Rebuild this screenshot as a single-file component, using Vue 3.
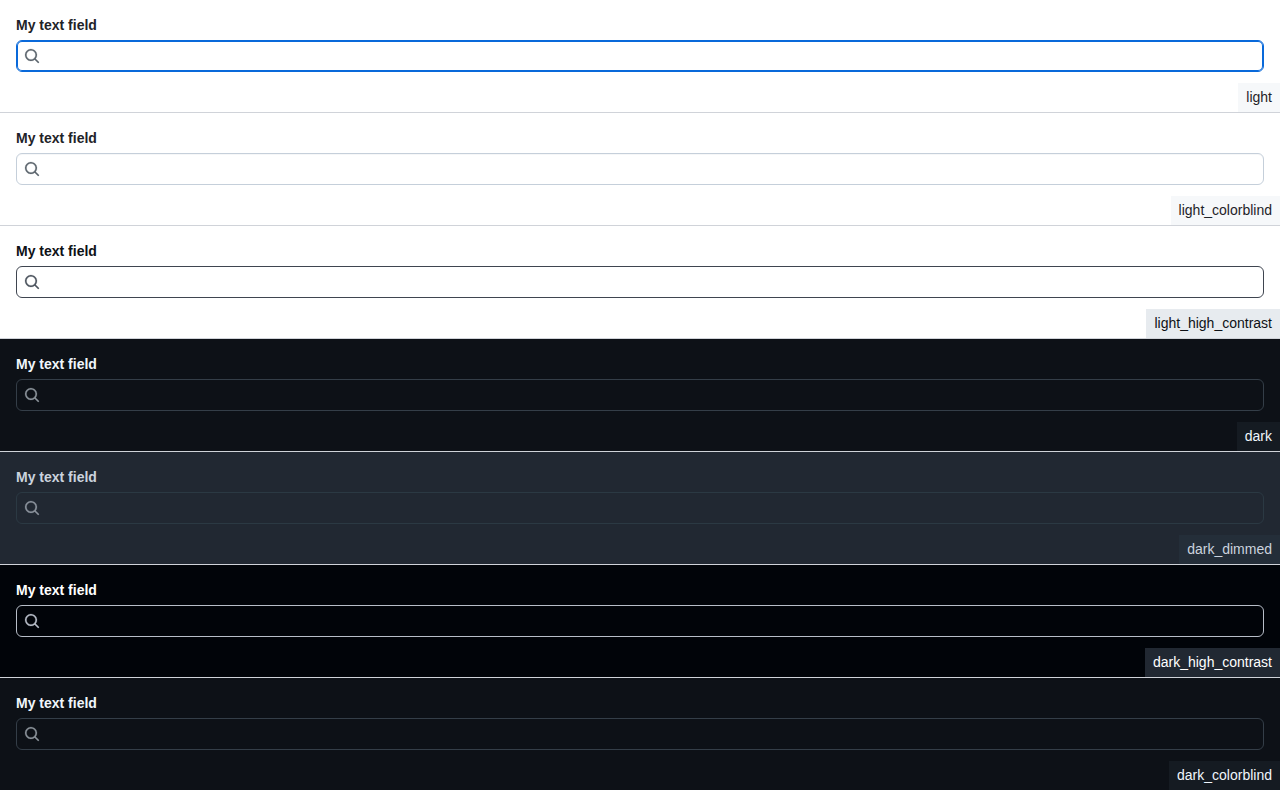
<script setup>
const themes = [
  { name: 'light', active: true },
  { name: 'light_colorblind' },
  { name: 'light_high_contrast' },
  { name: 'dark' },
  { name: 'dark_dimmed' },
  { name: 'dark_high_contrast' },
  { name: 'dark_colorblind' }
]
</script>

<template>
  <main class="themes">
    <section v-for="theme in themes" :key="theme.name" class="panel" :class="theme.name">
      <div class="field">
        <label class="label" :for="`field-${theme.name}`">My text field</label>
        <div class="control" :class="{ active: theme.active }">
          <svg class="icon" viewBox="0 0 16 16" width="16" height="16" aria-hidden="true">
            <path
              d="M10.68 11.74a6 6 0 0 1-7.922-8.982 6 6 0 0 1 8.982 7.922l3.04 3.04a.749.749 0 0 1-.326 1.275.749.749 0 0 1-.734-.215ZM11.5 7a4.499 4.499 0 1 0-8.997 0A4.499 4.499 0 0 0 11.5 7Z"
            />
          </svg>
          <input :id="`field-${theme.name}`" class="input" type="text" />
        </div>
      </div>
      <div class="tag">{{ theme.name }}</div>
    </section>
  </main>
</template>

<style>
body {
  margin: 0;
  background: #ffffff;
}
</style>

<style scoped>
.themes {
  font-family: "Liberation Sans", Arial, sans-serif;
  font-size: 14px;
}

.panel {
  display: flex;
  flex-direction: column;
  border-bottom: 1px solid #d0d3d9;
  background: var(--canvas);
  color: var(--fg);
}

.panel:last-child {
  border-bottom: 0;
}

.field {
  display: flex;
  flex-direction: column;
  align-items: stretch;
  gap: 6px;
  padding: 16px 16px 11px;
}

.label {
  align-self: flex-start;
  font-weight: 700;
  line-height: 18px;
}

.control {
  display: flex;
  align-items: center;
  box-sizing: border-box;
  height: 32px;
  padding: 0 7px;
  gap: 8px;
  border: 1px solid var(--border);
  border-radius: 6px;
  box-shadow: var(--inset, none);
}

.control.active,
.control:focus-within {
  border-color: #0969da;
  box-shadow: inset 0 0 0 1px #0969da;
}

.icon {
  flex: none;
  fill: var(--muted);
  stroke: var(--muted);
  stroke-width: 0.2;
}

.input {
  flex: 1;
  min-width: 0;
  padding: 0;
  border: 0;
  outline: 0;
  background: transparent;
  color: inherit;
  font: inherit;
  line-height: 20px;
}

.tag {
  align-self: flex-end;
  padding: 4px 8px;
  background: var(--subtle);
  line-height: 21px;
}

.light,
.light_colorblind {
  --canvas: #ffffff;
  --fg: #1f2328;
  --muted: #5b646d;
  --border: #c5cfda;
  --subtle: #f6f8fa;
  --inset: inset 0 1px 0 rgba(208, 215, 222, 0.2);
}

.light_high_contrast {
  --canvas: #ffffff;
  --fg: #0e1116;
  --muted: #4b535d;
  --border: #3f4550;
  --subtle: #e7ebef;
}

.dark,
.dark_colorblind {
  --canvas: #0d1117;
  --fg: #f0f6fc;
  --muted: #8b929a;
  --border: #343e48;
  --subtle: #151b22;
}

.dark_dimmed {
  --canvas: #212832;
  --fg: #cbd3de;
  --muted: #8b929c;
  --border: #2b3943;
  --subtle: #242e39;
}

.dark_high_contrast {
  --canvas: #010409;
  --fg: #ffffff;
  --muted: #b7bdc8;
  --border: #b7bdc8;
  --subtle: #212832;
}
</style>
